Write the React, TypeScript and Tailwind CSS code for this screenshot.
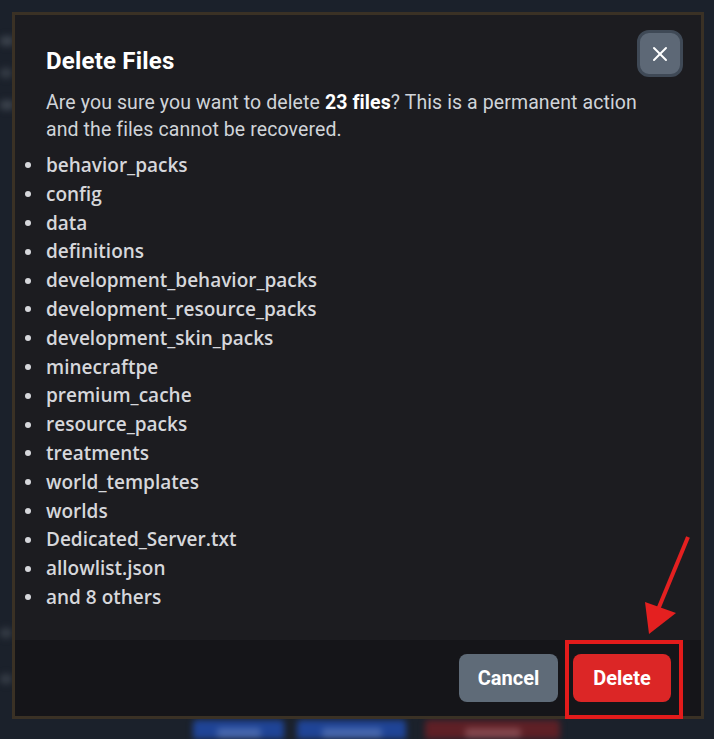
import { X } from "lucide-react";

const FILES = [
  "behavior_packs",
  "config",
  "data",
  "definitions",
  "development_behavior_packs",
  "development_resource_packs",
  "development_skin_packs",
  "minecraftpe",
  "premium_cache",
  "resource_packs",
  "treatments",
  "world_templates",
  "worlds",
  "Dedicated_Server.txt",
  "allowlist.json",
  "and 8 others",
];

function Backdrop() {
  // blurred page behind the dialog
  return (
    <div className="flex h-full w-full flex-col justify-between overflow-hidden blur-[3px]">
      <div className="flex flex-col gap-[22px] pt-[36px]">
        <div className="h-[10px] w-[14px] rounded bg-[#3a414b]" />
        <div className="h-[10px] w-[12px] rounded bg-[#343b45]" />
        <div className="h-[10px] w-[14px] rounded bg-[#3a414b]" />
      </div>
      <div className="flex flex-col gap-[36px]">
        <div className="h-[10px] w-[12px] rounded bg-[#343b45]" />
        <div className="h-[10px] w-[12px] rounded bg-[#343b45]" />
        <div className="flex h-[19px] items-start gap-[13px] pl-[193px]">
          <div className="flex h-[30px] w-[91px] justify-center rounded bg-[#1f4496] pt-[8px]">
            <div className="h-[10px] w-[44px] rounded bg-[#4767ad]" />
          </div>
          <div className="flex h-[30px] w-[109px] justify-center rounded bg-[#1f4496] pt-[8px]">
            <div className="h-[10px] w-[60px] rounded bg-[#4767ad]" />
          </div>
          <div className="ml-[6px] flex h-[30px] w-[135px] justify-center rounded bg-[#5e2026] pt-[8px]">
            <div className="h-[10px] w-[56px] rounded bg-[#83474d]" />
          </div>
        </div>
      </div>
    </div>
  );
}

export default function App() {
  return (
    <div className="relative h-[739px] w-[714px] overflow-hidden bg-[#1b212b] font-['Roboto',sans-serif]">
      <Backdrop />

      {/* dialog */}
      <div className="absolute left-[12px] top-[12px] flex h-[707px] w-[692px] flex-col border-[3px] border-[#3a3125] bg-[#1c1c20]">
        <div className="flex-1 pl-[31px] pt-[15px]">
          <div className="flex items-start justify-between pr-[18px]">
            <h2 className="mt-[16px] text-[24px] font-bold leading-[30px] tracking-[0.2px] text-white">
              Delete Files
            </h2>
            <button
              type="button"
              className="flex h-[47px] w-[46px] items-center justify-center rounded-[12px] border-[3px] border-[#3f4956] bg-[#5d6876] text-white"
            >
              <X className="h-[24px] w-[24px]" strokeWidth={2} />
            </button>
          </div>
          <p className="mt-[12px] pr-[40px] text-[19.5px] leading-[27px] tracking-[0.1px] text-[#d0d4d9]">
            Are you sure you want to delete <b className="font-bold text-white">23 files</b>? This is a
            permanent action and the files cannot be recovered.
          </p>
          <ul className="ml-[-21px] mt-[8px] font-['Open_Sans',sans-serif] text-[19px] font-semibold leading-[28.8px] text-[#d6d7db]">
            {FILES.map((name) => (
              <li key={name} className="flex items-center gap-[15px]">
                <span className="h-[6px] w-[6px] shrink-0 rounded-full bg-[#d6d7db]" />
                {name}
              </li>
            ))}
          </ul>
        </div>

        <div className="flex h-[76px] items-center justify-end gap-[15px] bg-[#151519] pr-[30px]">
          <button
            type="button"
            className="h-[48px] w-[99px] rounded-[8px] bg-[#5f6b78] text-[20px] font-bold text-white"
          >
            Cancel
          </button>
          <button
            type="button"
            className="h-[48px] w-[98px] rounded-[8px] bg-[#dc2626] text-[20px] font-bold text-white"
          >
            Delete
          </button>
        </div>
      </div>

      {/* annotation */}
      <div className="absolute left-[565px] top-[640px] h-[79px] w-[118px] border-4 border-[#e31b1b]" />
      <svg className="absolute left-0 top-0" width="714" height="739" viewBox="0 0 714 739">
        <line x1="688" y1="537" x2="657" y2="612" stroke="#e42020" strokeWidth="4" />
        <polygon points="645,602 676,613 649,634" fill="#e42020" />
      </svg>
    </div>
  );
}
